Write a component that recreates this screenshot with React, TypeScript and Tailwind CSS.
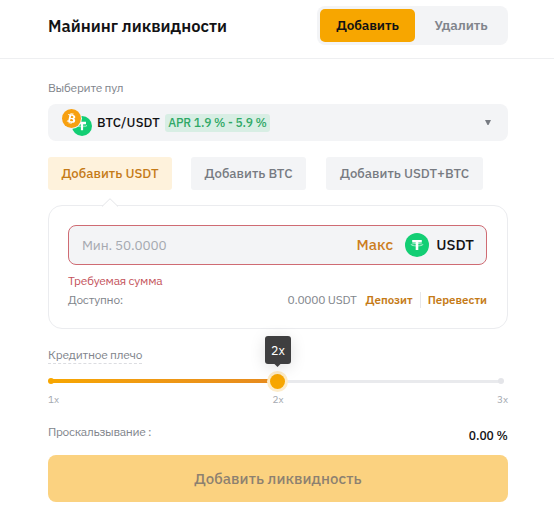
import { FaBtc } from "react-icons/fa";

const tabs = [
  { label: "Добавить USDT", box: "w-[124px] bg-[#fef2dc] text-[#c57b18]" },
  { label: "Добавить BTC", box: "ml-[19px] w-[115px] bg-[#f3f4f6] text-[#777b82]" },
  { label: "Добавить USDT+BTC", box: "ml-5 w-[157px] bg-[#f3f4f6] text-[#777b82]" }
];

function TetherIcon({ className }: { className: string }) {
  return (
    <svg className={className} viewBox="0 0 24 24" fill="none" aria-hidden="true">
      <circle cx="12" cy="12" r="12" fill="#13ce74" />
      <path d="M7.2 7h9.6v2.5h-3.5v7.5h-2.6V9.5H7.2z" fill="#fff" />
      <ellipse cx="12" cy="11.7" rx="5.8" ry="1.2" stroke="#fff" strokeWidth="0.6" />
    </svg>
  );
}

function ModeSwitch() {
  return (
    <div className="flex h-[39px] w-[191px] rounded-lg bg-[#f3f4f6] p-[3px]">
      <button className="h-[33px] w-[95px] rounded-[5px] bg-[#f7a600] text-[13.5px] font-semibold tracking-[-0.1px] text-[#121214]">
        Добавить
      </button>
      <button className="h-[33px] flex-1 pl-[2px] text-[13.5px] font-semibold tracking-[-0.1px] text-[#81858c]">
        Удалить
      </button>
    </div>
  );
}

function PoolSelect() {
  return (
    <button className="mt-2 flex h-[37px] w-full items-center rounded-lg bg-[#f3f4f6] pr-[17px] pl-[14px] text-left">
      <span className="relative h-[27px] w-[30px] shrink-0">
        <TetherIcon className="absolute right-0 bottom-0 h-5 w-5" />
        <span className="absolute top-0 left-0 flex h-[19px] w-[19px] items-center justify-center rounded-full bg-[#f7a010] ring-1 ring-[#f3f4f6]">
          <FaBtc className="h-[11px] w-[11px] rotate-12 text-white" />
        </span>
      </span>
      <span className="ml-[5px] w-[64px] text-[13px] font-medium tracking-[0.15px] whitespace-nowrap text-[#121214]">
        BTC/USDT
      </span>
      <span className="ml-1 flex h-[18px] w-[105px] items-center justify-center rounded-[3px] bg-[#d8eee4] text-[12px] font-medium tracking-[-0.12px] whitespace-nowrap text-[#2fa866]">
        APR 1.9 % - 5.9 %
      </span>
      <svg className="ml-auto h-[5px] w-[6px]" viewBox="0 0 6 5" aria-hidden="true">
        <path d="M0 0h6L3.5 5h-1z" fill="#777b82" />
      </svg>
    </button>
  );
}

function AmountCard() {
  return (
    <section className="relative mt-[15px] h-[124px] rounded-[14px] border border-[#ebecef] pt-[19px] pr-5 pl-[19px]">
      <svg className="absolute -top-[8px] left-[53px] h-[9px] w-4" viewBox="0 0 16 9" aria-hidden="true">
        <path d="M0 8.5 8 .7l8 7.8" fill="#fff" stroke="#e4e5e8" />
        <path d="M1 9h14" stroke="#fff" />
      </svg>
      <div className="flex h-10 items-center rounded-lg border border-[#cf6b73] bg-[#f3f4f6] pr-3 pl-[13px]">
        <span className="mt-px text-[13.5px] tracking-[-0.12px] text-[#a5a9b0]">Мин. 50.0000</span>
        <span className="ml-auto text-[15px] font-medium tracking-[0.1px] text-[#cc7d20]">Макс</span>
        <TetherIcon className="ml-[12px] h-[24px] w-[24px]" />
        <span className="ml-[7px] text-[15px] font-medium text-[#121214]">USDT</span>
      </div>
      <p className="mt-[7px] h-[18px] text-[12px] leading-[18px] tracking-[-0.25px] text-[#c4535c]">
        Требуемая сумма
      </p>
      <div className="mt-px flex h-[17px] items-center text-[12px] tracking-[-0.25px] text-[#81858c]">
        <span>Доступно:</span>
        <span className="ml-auto">0.0000 USDT</span>
        <a className="ml-[9px] text-[11.5px] font-semibold tracking-normal text-[#c57b18]">Депозит</a>
        <span className="mx-[7px] h-4 w-px bg-[#e6e7ea]" />
        <a className="text-[11.5px] font-semibold tracking-normal text-[#c57b18]">Перевести</a>
      </div>
    </section>
  );
}

function LeverageSlider() {
  return (
    <div>
      <div className="relative mt-[11px] flex h-[14px] items-center">
        <div className="ml-[2px] h-1 w-[228px] rounded-l-full bg-gradient-to-r from-[#f7a600] to-[#e68a1e]" />
        <div className="mr-[6px] h-[3px] flex-1 bg-[#e9eaed]" />
        <span className="absolute left-0 h-[6px] w-[6px] rounded-full bg-[#f7a600]" />
        <span className="absolute right-[4px] h-[6px] w-[6px] rounded-full bg-[#e4e5e9]" />
        <span className="absolute left-[222px] h-[15px] w-[15px] rounded-full bg-[#f7a600] ring-[3px] ring-[#fdecc9]" />
        <div className="absolute bottom-[24px] left-[217px] flex h-[28px] w-[26px] items-center justify-center rounded-[3px] bg-[#3f3f40] text-[12.5px] text-white shadow-[0_3px_16px_rgba(0,0,0,0.13)]">
          2x
          <span className="absolute -bottom-[2px] left-[10px] h-[5px] w-[5px] rotate-45 bg-[#3f3f40]" />
        </div>
      </div>
      <div className="mt-1 flex h-[14px] items-center justify-between text-[10px] text-[#a5a9b0]">
        <span>1x</span>
        <span>2x</span>
        <span>3x</span>
      </div>
    </div>
  );
}

export default function App() {
  return (
    <main className="h-[515px] w-[554px] overflow-hidden bg-white font-['IBM_Plex_Sans',Inter,'Noto_Sans',sans-serif]">
      <header className="flex h-[59px] items-start justify-between border-b border-[#eeeff1] pt-[6px] pr-[46px] pl-12">
        <h1 className="mt-[8px] text-[16.5px] leading-6 font-semibold text-[#121214]">Майнинг ликвидности</h1>
        <ModeSwitch />
      </header>

      <div className="mr-[46px] ml-12 pt-5">
        <p className="h-[17px] text-[12px] leading-[18px] tracking-[-0.25px] text-[#81858c]">Выберите пул</p>
        <PoolSelect />

        <nav className="mt-4 flex h-[33px]">
          {tabs.map((tab) => (
            <button
              key={tab.label}
              className={`shrink-0 rounded-[3px] text-[13.2px] font-medium whitespace-nowrap ${tab.box}`}
            >
              {tab.label}
            </button>
          ))}
        </nav>

        <AmountCard />

        <div className="mt-[18px] flex h-[17px]">
          <span className="border-b border-dashed border-[#dcdde1] text-[12px] leading-4 tracking-[-0.25px] text-[#81858c]">
            Кредитное плечо
          </span>
        </div>
        <div className="-mt-px">
          <LeverageSlider />
        </div>

        <div className="mt-[17px] flex h-[32px] justify-between">
          <span className="text-[12px] leading-[18px] tracking-[-0.33px] text-[#81858c]">Проскальзывание :</span>
          <span className="mt-1 text-[12px] leading-[18px] font-medium text-[#121214]">0.00 %</span>
        </div>
        <button className="h-[47px] w-full rounded-lg bg-[#fbd280] pt-[2px] text-[15px] font-medium tracking-[0.05px] text-[#8d8170]">
          Добавить ликвидность
        </button>
      </div>
    </main>
  );
}
